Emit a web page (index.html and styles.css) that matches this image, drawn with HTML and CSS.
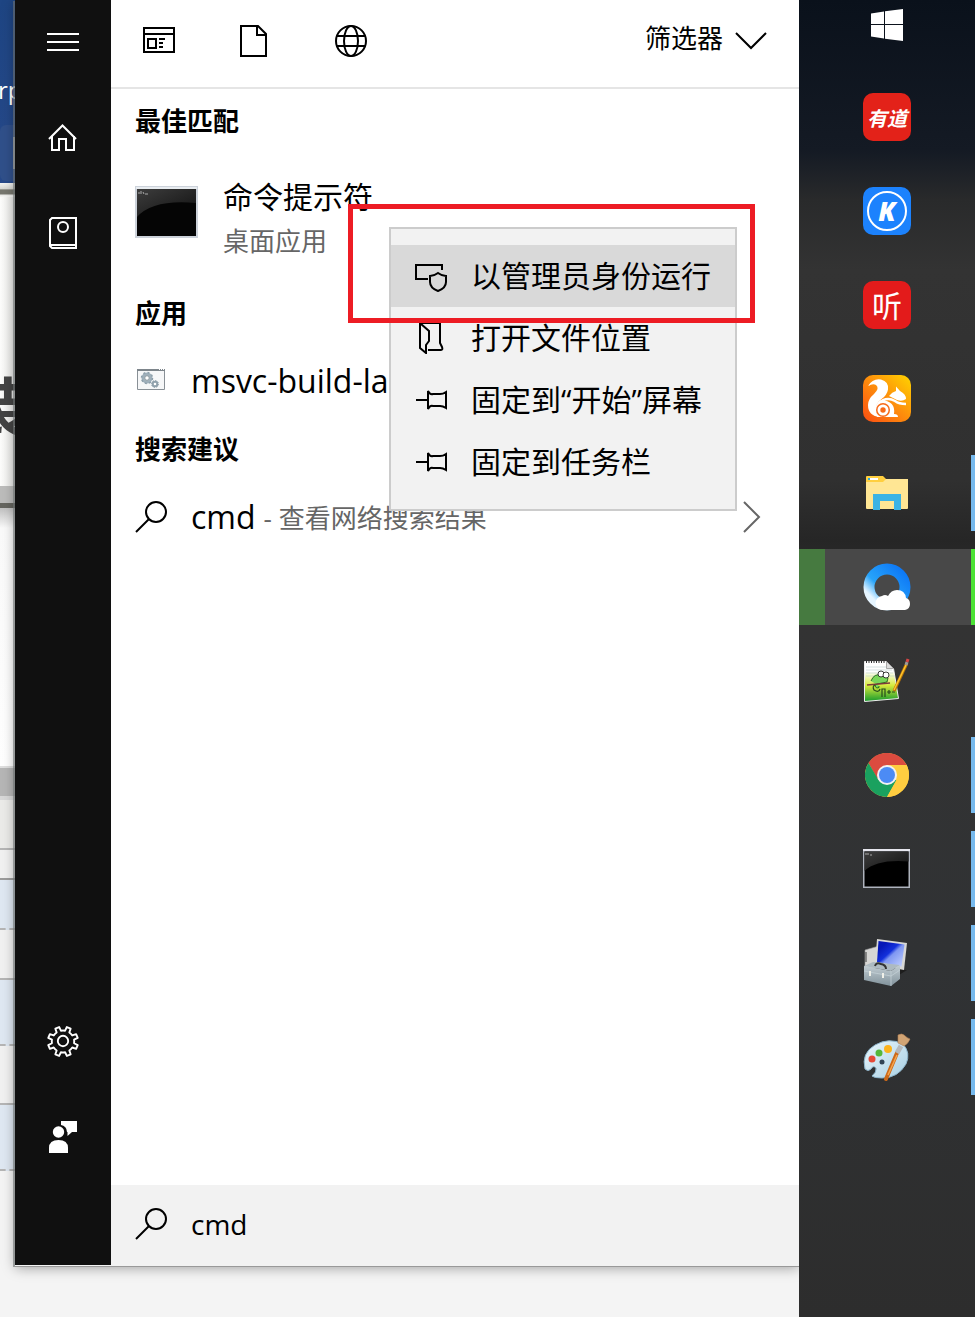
FILE: index.html
```html
<!DOCTYPE html>
<html lang="zh-CN">
<head>
  <meta charset="UTF-8" />
  <meta name="viewport" content="width=device-width, initial-scale=1.0"/>
  <title>cmd</title>
  <link rel="stylesheet" href="styles.css">
</head>
<body>

  <!-- Window behind the start menu -->
  <div class="backdrop">
    <div class="ribbon">
      <span class="ribbon-text">rp</span>
      <div class="ribbon-box"><i></i></div>
    </div>
    <div class="ruler"></div>
    <div class="page"><span class="page-text">装</span></div>
    <div class="page-end"></div>
    <div class="blank"></div>
    <div class="scroll"></div>
    <div class="strip strip-a"></div>
    <div class="strip strip-b"></div>
    <div class="strip strip-blue"></div>
    <div class="strip strip-c"></div>
    <div class="strip strip-blue strip-tall"></div>
    <div class="strip strip-d"></div>
    <div class="strip strip-blue strip-tall"></div>
  </div>

  <div class="start">
    <nav class="rail">
      <button type="button" aria-label="菜单">
        <svg width="32" height="32" viewBox="0 0 32 32" fill="none" stroke="#fff" stroke-width="2"><path d="M0 8h32M0 16h32M0 24h32"/></svg>
      </button>
      <button type="button" aria-label="主页">
        <svg width="32" height="32" viewBox="0 0 32 32" fill="none" stroke="#fff" stroke-width="2"><path d="M2 17L15.500 3.500 29 17M5 14v14h7V17h7v11h8V14"/></svg>
      </button>
      <button type="button" aria-label="笔记本">
        <svg width="32" height="34" viewBox="0 0 32 34" fill="none" stroke="#fff" stroke-width="2"><path d="M5 1h24v30H5l-2-2V3zM4 28h25"/><circle cx="16" cy="10" r="5"/></svg>
      </button>
      <button type="button" class="rail-bottom" aria-label="设置">
        <svg width="34" height="34" viewBox="0 0 36 36" fill="none" stroke="#fff" stroke-width="2" stroke-linejoin="round"><path d="M13.900 3.200l1.900 3.900a11 11 0 0 1 4.400 0l1.900-3.900 4 1.700-1.400 4.100a11 11 0 0 1 3.100 3.100l4.100-1.400 1.700 4-3.900 1.900a11 11 0 0 1 0 3.800l3.900 1.900-1.700 4-4.100-1.400a11 11 0 0 1-3.100 3.100l1.400 4.100-4 1.700-1.900-3.900a11 11 0 0 1-4.400 0l-1.900 3.900-4-1.700 1.400-4.100a11 11 0 0 1-3.100-3.100l-4.100 1.400-1.700-4 3.900-1.900a11 11 0 0 1 0-3.800l-3.900-1.900 1.700-4 4.100 1.400a11 11 0 0 1 3.100-3.100L9.900 4.900z"/><circle cx="18" cy="18" r="5.500"/></svg>
      </button>
      <button type="button" aria-label="反馈">
        <svg width="32" height="34" viewBox="0 0 32 34" fill="#fff"><path d="M14 1h16v11h-5l-4.500 4v-4H20a7 7 0 0 0-6-7z"/><circle cx="11.500" cy="12" r="5.700"/><path d="M2 33v-5q0-8 9.500-8t9.500 8v5z"/></svg>
      </button>
    </nav>

    <main class="panel">
      <header class="filters">
        <button type="button" aria-label="应用">
          <svg width="32" height="32" viewBox="0 0 32 32" fill="none" stroke="#000" stroke-width="2"><path d="M1 3h30v24H1zM1 9h30M5 14h8v9H5zM16 14h6M16 18h4M16 22h4"/></svg>
        </button>
        <button type="button" aria-label="文档">
          <svg width="32" height="32" viewBox="0 0 32 32" fill="none" stroke="#000" stroke-width="2"><path d="M2 1h17l8 8v22H2zM18 1v9h9"/></svg>
        </button>
        <button type="button" aria-label="网页">
          <svg width="32" height="32" viewBox="0 0 32 32" fill="none" stroke="#000" stroke-width="2"><circle cx="16" cy="16" r="15"/><ellipse cx="16" cy="16" rx="7" ry="15"/><path d="M2 11h28M2 21h28"/></svg>
        </button>
        <button type="button" class="filter-more">
          <span>筛选器</span>
          <svg width="32" height="18" viewBox="0 0 32 18" fill="none" stroke="#000" stroke-width="2"><path d="M1 1l15 15L31 1"/></svg>
        </button>
      </header>

      <h2>最佳匹配</h2>
      <a href="#" class="best">
        <svg width="63" height="52" viewBox="0 0 63 52"><defs><linearGradient id="shine" x1="0" y1="0" x2="1" y2="1"><stop offset="0" stop-color="#3d3d3d"/><stop offset="1" stop-color="#101010"/></linearGradient></defs><path fill="#ccd2da" d="M0 0h63v52H0z"/><path fill="#e8ecf0" d="M1 1h61v2H1z"/><path fill="#050505" d="M2 3h59v47H2z"/><path fill="url(#shine)" d="M2 3h59v14Q18 13 2 31z"/><path fill="none" stroke="#aaa" d="M3 7h2M6 5v3M8 6l1 2M10 8h3"/></svg>
        <span>
          <span class="name">命令提示符</span>
          <span class="kind">桌面应用</span>
        </span>
      </a>

      <h2>应用</h2>
      <a href="#" class="result">
        <svg width="32" height="28" viewBox="0 0 32 28"><path fill="#f6f7f8" stroke="#899096" d="M2.500 2.500h27v20h-27z"/><path stroke="#7d858b" stroke-width="2" d="M2 3h28"/><path stroke="#fff" d="M24 2.500h1M26 2.500h1M28 2.500h1"/><circle cx="12" cy="11" r="4" fill="#fff" stroke="#9fb0bb" stroke-width="3"/><circle cx="12" cy="11" r="5.500" fill="none" stroke="#8b9da9" stroke-width="1.500" stroke-dasharray="2 2.300"/><circle cx="12" cy="11" r="2.300" fill="#fff" stroke="#829098"/><circle cx="20" cy="17" r="2.300" fill="#fff" stroke="#91a2ad" stroke-width="2"/><circle cx="20" cy="17" r="3.500" fill="none" stroke="#8b9da9" stroke-dasharray="1.400 1.300"/></svg>
        <span class="latin">msvc-build-la</span>
      </a>

      <h2>搜索建议</h2>
      <a href="#" class="result">
        <svg width="32" height="34" viewBox="0 0 32 34" fill="none" stroke="#000" stroke-width="2"><circle cx="21" cy="12" r="10"/><path d="M14 19L1 32"/></svg>
        <span class="latin">cmd</span>
        <span class="hint">- 查看网络搜索结果</span>
        <svg class="go" width="18" height="32" viewBox="0 0 18 32" fill="none" stroke="#666" stroke-width="2"><path d="M1 1l15 15L1 31"/></svg>
      </a>

      <label class="search">
        <svg width="32" height="34" viewBox="0 0 32 34" fill="none" stroke="#000" stroke-width="2"><circle cx="21" cy="12" r="10"/><path d="M14 19L1 32"/></svg>
        <input type="text" value="cmd" aria-label="搜索">
      </label>

      <!-- Right-click menu -->
      <div class="context">
        <button type="button" class="active">
          <svg width="32" height="32" viewBox="0 0 32 32" fill="none" stroke="#000" stroke-width="2"><path d="M27 10V5H1v14h12"/><path d="M23 13q4 3 8 3v6q0 6-8 9-8-3-8-9v-6q4 0 8-3z"/></svg>
          以管理员身份运行
        </button>
        <button type="button">
          <svg width="32" height="32" viewBox="0 0 32 32" fill="none" stroke="#000" stroke-width="2"><path d="M13 28h13q2 0 1-3l-2-4V1H5v25l6 5v-8l3-4V9L6 2"/></svg>
          打开文件位置
        </button>
        <button type="button">
          <svg width="32" height="32" viewBox="0 0 32 32" fill="none" stroke="#000" stroke-width="2"><path d="M1 16h11M13 7v18q2-4 5-3h7q3 0 6 2V8q-3 2-6 2h-7q-3 1-5-3z"/></svg>
          固定到“开始”屏幕
        </button>
        <button type="button">
          <svg width="32" height="32" viewBox="0 0 32 32" fill="none" stroke="#000" stroke-width="2"><path d="M1 16h11M13 7v18q2-4 5-3h7q3 0 6 2V8q-3 2-6 2h-7q-3 1-5-3z"/></svg>
          固定到任务栏
        </button>
      </div>
      <div class="marker"></div>
    </main>
  </div>

  <aside class="taskbar">
    <button type="button" class="win" aria-label="开始">
      <svg width="32" height="32" viewBox="0 0 32 32" fill="#fff"><path d="M0 4.500l13-2V15H0zM14 2.300L32 0v15H14zM0 16h13v13.500L0 27.500zM14 16h18v16l-18-2.300z"/></svg>
    </button>
    <button type="button" aria-label="有道">
      <span class="tile youdao">有道</span>
    </button>
    <button type="button" aria-label="酷狗">
      <span class="tile kugou"><b>K</b></span>
    </button>
    <button type="button" aria-label="听">
      <span class="tile ting">听</span>
    </button>
    <button type="button" aria-label="UC">
      <svg width="48" height="48" viewBox="0 0 48 48"><defs><linearGradient id="uc" x1="0" y1="1" x2="1" y2="0"><stop offset="0" stop-color="#fb4d12"/><stop offset=".5" stop-color="#fd8d0c"/><stop offset="1" stop-color="#ffd400"/></linearGradient></defs><rect width="48" height="47" rx="10" fill="url(#uc)"/><path fill="#fff" d="M5 11Q10 3 18 4.500q8 2 7 10-1 6-7 10-5 4-5 9 0 4 4 8.500Q5 41 5 30q0-6 6-11 6-6 2-9-3-2-8 1z"/><path fill="#fff" d="M26 21q3-4 7-5v-4.500l4 4.500q6 3 6 8-4 3-9 1-4-2-8-4z"/><path fill="none" stroke="#fff" stroke-width="2.500" d="M15 29q8-8 17-3 4 3 11 3"/><path fill="#fff" d="M18 25q15 1 13 14 4 0 4 3H14q-5-11 4-17z"/><circle cx="20" cy="35" r="7" fill="#f76a18"/><circle cx="20" cy="35" r="5.500" fill="#fff"/><circle cx="20" cy="35" r="2.700" fill="#f76a18"/></svg>
    </button>
    <button type="button" class="open" aria-label="文件资源管理器">
      <svg width="44" height="36" viewBox="0 0 44 36"><path fill="#ffe694" d="M1 4h42v29q0 1-1 1H2q-1 0-1-1z"/><path fill="#ffcf3f" d="M1 2q0-1 1-1h16l3 3-3 3H1z"/><path fill="#fff" d="M5 3h8v2H5z"/><path fill="#2cabe0" d="M3 3h2v2H3z"/><path fill="#3bb3e5" d="M8 19h28v16h-7V26H15v9H8z"/></svg>
    </button>
    <button type="button" class="open current" aria-label="浏览器">
      <svg width="48" height="48" viewBox="0 0 48 48"><defs><linearGradient id="qq" x1="0" y1="1" x2="1" y2="0"><stop offset=".15" stop-color="#e6f5ff"/><stop offset=".4" stop-color="#27a4fa"/><stop offset="1" stop-color="#0b74f5"/></linearGradient></defs><circle cx="24" cy="24" r="18" fill="none" stroke="url(#qq)" stroke-width="11"/><path fill="#fff" d="M20 47a7 7 0 0 1-1-14q3-2 6 0 3-6 9-6 8 0 9 8 4 1 4 6t-5 6z"/></svg>
    </button>
    <button type="button" aria-label="Notepad++">
      <svg width="48" height="48" viewBox="0 0 48 48"><defs><linearGradient id="npp" x1="0" y1="0" x2="0" y2="1"><stop offset=".25" stop-color="#fff"/><stop offset=".6" stop-color="#d6ea3c"/><stop offset="1" stop-color="#159a2c"/></linearGradient></defs><path fill="url(#npp)" stroke="#eee" d="M1.500 4.500h22l7 7 5 30-34 3z"/><path fill="#ddd" stroke="#888" stroke-width=".7" d="M23.500 4.500v7h7z"/><path stroke="#bcc" stroke-width=".6" d="M3 10h20M3 13h26M3 16h27M3 19h28"/><path fill="none" stroke="#333" stroke-width="2" stroke-dasharray="1 1.500" d="M3 5h20"/><path fill="#7ad65a" stroke="#151" stroke-width=".8" d="M8 24q3-8 11-6l6 3-1 4-10 2q-4 2 0 4 3 0 2-2"/><path stroke="#7b3b3b" stroke-width="1.500" d="M4 28l23-2"/><circle cx="18" cy="17" r="3" fill="#fff" stroke="#111" stroke-width=".8"/><circle cx="23" cy="18" r="3" fill="#fff" stroke="#111" stroke-width=".8"/><path fill="none" stroke="#274a1c" stroke-width="1.200" d="M12 28q-3 1-1 5 5 3 6-1M19 40v-8h3v8M24 35h4M26 33v4M29 35h3"/><path stroke="#b97508" stroke-width="3" d="M31 34L44 6"/><path stroke="#ffc52b" stroke-width="1.500" d="M31 33L43 8"/><path stroke="#999" stroke-width="3" d="M43 8l1-3"/><path stroke="#d64545" stroke-width="3" d="M44 5l1-3"/></svg>
    </button>
    <button type="button" class="open" aria-label="Chrome">
      <svg width="44" height="44" viewBox="0 0 44 44"><circle cx="22" cy="22" r="22" fill="#ffcd40"/><path fill="#db4b3f" d="M3.500 10A22 22 0 0 1 41.600 12H22L13 27z"/><path fill="#1aa15f" d="M3.500 10A22 22 0 0 0 22 44l9.500-17-18 0z"/><path fill="#ffcd40" d="M22 44a22 22 0 0 0 19.600-32H22l9.500 15z"/><circle cx="22" cy="22" r="10" fill="#f2f2f2"/><circle cx="22" cy="22" r="8" fill="#4c8bf5"/></svg>
    </button>
    <button type="button" class="open" aria-label="命令提示符">
      <svg width="48" height="42" viewBox="0 0 48 42"><path fill="#aeb3bd" d="M0 1h47v39H0z"/><path fill="#e6e6ee" d="M0 1h47v2H0z"/><path fill="#000" d="M1.500 3.500h44v35h-44z"/><path fill="url(#shine)" d="M1.500 3.500h44v10Q14 11 1.500 23z"/><path fill="none" stroke="#aaa" d="M2 6h2M5 5v2M7 7h2"/></svg>
    </button>
    <button type="button" class="open" aria-label="管理工具">
      <svg width="48" height="48" viewBox="0 0 48 48"><defs><linearGradient id="scr" x1="0" y1="0" x2="1" y2="1"><stop offset=".2" stop-color="#0618b8"/><stop offset=".45" stop-color="#1330dc"/><stop offset=".55" stop-color="#7f97f2"/><stop offset="1" stop-color="#c5d4ff"/></linearGradient><linearGradient id="box" x1="0" y1="0" x2="0" y2="1"><stop offset="0" stop-color="#c3ced4"/><stop offset="1" stop-color="#81929b"/></linearGradient></defs><path fill="#d6d6d4" stroke="#999" stroke-width=".6" d="M2 11l14-4v22H2z"/><path stroke="#3b3b3b" d="M3 13v10"/><path fill="#1d1d1d" d="M32 31l12 0-8 5z"/><path fill="#d8d8d6" d="M14 0l30 4-3 27-29-6z"/><path fill="url(#scr)" d="M15.500 2l26 3.500-3 22L14 23z"/><path fill="#adbac1" d="M1 27l9-4 27 3-9 6z"/><path fill="url(#box)" d="M1 27l27 5 9-6v14l-9 7-27-6z"/><path fill="none" stroke="#c4d0d6" stroke-width=".8" d="M1 32l27 5 9-6M28 32v15"/><path fill="none" stroke="#333" stroke-width="2" d="M12 27q1-4 6-2 5 1 5 5"/><path stroke="#f0f0e8" stroke-width="2" d="M7 32v5M20 34v5"/></svg>
    </button>
    <button type="button" class="open" aria-label="画图">
      <svg width="48" height="48" viewBox="0 0 48 48"><defs><linearGradient id="pal" x1="0" y1="0" x2="1" y2="1"><stop offset="0" stop-color="#e9f7fd"/><stop offset="1" stop-color="#a9cfe3"/></linearGradient></defs><path fill="url(#pal)" stroke="#8db4cb" d="M2 36Q-2 20 12 12t28-1q8 9 3 20-8 14-24 14-8 0-10-2 5-4 4-8-3-3-5 1-3 3-6 0z"/><circle cx="9" cy="26" r="3.500" fill="#e54a38"/><circle cx="16" cy="20" r="3.500" fill="#55b83b"/><circle cx="25" cy="16" r="4" fill="#fbb31d"/><circle cx="19" cy="29" r="2.500" fill="#314354"/><path stroke="#cd6918" stroke-width="4" stroke-linecap="round" d="M34 20L23 46"/><path stroke="#f4a650" stroke-width="1.500" d="M34 22l-9 20"/><path stroke="#b4b8bb" stroke-width="5" d="M34 20l4-7"/><path fill="#d1a474" stroke="#b18255" stroke-width=".6" d="M35 10V2q4-2 6 0 3 3 6 4-2 5-6 7z"/></svg>
    </button>
  </aside>

</body>
</html>
```
FILE: styles.css
```css
* {
  box-sizing: border-box;
}
body {
  margin: 0;
  min-height: 100vh;
  display: flex;
  background-color: #f4f4f4;
  font-family: "Open Sans", "Noto Sans CJK SC", sans-serif;
  color: #000;
}
button {
  border: none;
  background: none;
  padding: 0;
  font-family: inherit;
  color: inherit;
  cursor: pointer;
}
a {
  color: inherit;
  text-decoration: none;
}
svg {
  display: block;
  flex: none;
}

/* window behind */
.backdrop {
  width: 15px;
  flex: none;
  overflow: hidden;
}
.ribbon {
  height: 183px;
  padding-top: 74px;
  background: linear-gradient(#1e4583, #27498a);
  overflow: hidden;
}
.ribbon-text {
  display: block;
  height: 51px;
  margin-left: -2px;
  font-size: 24px;
  line-height: 32px;
  color: #fff;
}
.ribbon-box {
  height: 56px;
  padding: 12px 0;
  background-color: #30508a;
  border-radius: 6px 0 0 6px;
}
.ribbon-box i {
  display: block;
  width: 2px;
  height: 32px;
  margin-left: 13px;
  background-color: #b8bcc4;
}
.ruler {
  height: 14px;
  background: linear-gradient(#f4f4f2 0, #d8d8d4 40%, #77776f 50%, #77776f 75%, #f4f4f2 90%);
}
.page {
  height: 289px;
  padding-top: 170px;
  background: linear-gradient(to right, #fdfdfc, #e4e4e2);
}
.page-text {
  display: block;
  width: 64px;
  margin-left: -35px;
  font-size: 64px;
  font-weight: bold;
  line-height: 80px;
  color: #444;
}
.page-end {
  height: 22px;
  background-color: #bcbcbb;
  border-bottom: 5px solid #65655f;
}
.blank {
  height: 258px;
  background: linear-gradient(#c0c0c0, #fafafa 20px, #fff);
}
.scroll {
  height: 34px;
  background-color: #b6b6b6;
  border-top: 2px solid #dedede;
  border-bottom: 4px solid #d8d8d8;
}
.strip {
  height: 50px;
  border-bottom: 2px solid #b5b5b5;
  background-color: #f1f1f1;
}
.strip-a {
  background-color: #ebebe9;
}
.strip-b {
  height: 30px;
  border-color: #9c9c9c;
}
.strip-blue {
  background-color: #dfe8f2;
  border-bottom-style: dashed;
}
.strip-tall {
  height: 66px;
}
.strip-d {
  height: 59px;
}

/* start menu */
.start {
  flex: 1;
  display: flex;
  margin-bottom: 51px;
  position: relative;
  box-shadow: 0 1px 0 #999, -2px 1px 0 rgba(110, 115, 115, 0.6), 0 2px 12px rgba(0, 0, 0, 0.35);
}
.rail {
  width: 96px;
  flex: none;
  display: flex;
  flex-direction: column;
  gap: 16px;
  padding: 2px 0 88px;
  background-color: #101010;
  border-bottom: 1px solid #f4f4f4;
}
.rail button {
  height: 80px;
  display: flex;
  align-items: center;
  justify-content: center;
}
.rail .rail-bottom {
  margin-top: auto;
}
.panel {
  flex: 1;
  min-width: 0;
  display: flex;
  flex-direction: column;
  position: relative;
  background-color: #fff;
}
.filters {
  height: 89px;
  display: flex;
  align-items: center;
  gap: 64px;
  padding: 0 32px 6px;
  border-bottom: 2px solid #e5e5e5;
}
.filter-more {
  margin-left: auto;
  display: flex;
  align-items: center;
  gap: 12px;
  font-size: 26px;
  line-height: 40px;
}
.filter-more span {
  padding-bottom: 6px;
}
h2 {
  margin: 0;
  padding: 0 24px;
  font-size: 26px;
  line-height: 64px;
}
.best {
  height: 128px;
  display: flex;
  gap: 25px;
  padding: 22px 24px;
}
.best svg {
  margin-top: 11px;
}
.name,
.kind {
  display: block;
  font-size: 30px;
  line-height: 44px;
}
.kind {
  font-size: 26px;
  color: #666;
}
.result {
  height: 72px;
  display: flex;
  align-items: center;
  padding: 0 38px 0 24px;
}
.latin {
  margin: 0 8px 0 24px;
  padding-bottom: 2px;
  font-size: 32px;
}
.hint {
  font-size: 26px;
  color: #666;
}
.go {
  margin-left: auto;
}
.search {
  height: 81px;
  margin-top: auto;
  display: flex;
  align-items: center;
  gap: 24px;
  padding: 0 24px 3px;
  background-color: #f2f2f2;
}
.search input {
  flex: 1;
  min-width: 0;
  padding: 0;
  border: none;
  outline: none;
  background: none;
  font-family: inherit;
  font-size: 28px;
  color: #000;
}

/* menu that opens over the results */
.context {
  position: absolute;
  left: 278px;
  top: 227px;
  width: 348px;
  padding: 16px 0;
  background-color: #f2f2f2;
  border: 2px solid #ccc;
}
.context button {
  width: 100%;
  height: 62px;
  display: flex;
  align-items: center;
  gap: 24px;
  padding: 0 24px;
  font-size: 30px;
  line-height: 44px;
  white-space: nowrap;
}
.context .active {
  background-color: #d9d9d9;
}
.marker {
  position: absolute;
  left: 237px;
  top: 204px;
  width: 407px;
  height: 119px;
  border: 5px solid #ed1c24;
  pointer-events: none;
}

/* taskbar */
.taskbar {
  width: 176px;
  flex: none;
  display: flex;
  flex-direction: column;
  gap: 18px;
  position: relative;
  background: linear-gradient(#0a111b 0, #141a24 150px, #292a2b 200px, #333 270px, #303030 480px, #262626 540px, #333 620px, #303234 960px, #2d2d2d 100%);
}
.taskbar button {
  height: 76px;
  display: flex;
  align-items: center;
  justify-content: center;
}
.taskbar .win {
  height: 50px;
  margin-bottom: 11px;
}
.taskbar .open {
  border-right: 4px solid #76b9ed;
  padding-left: 4px;
}
.taskbar .current {
  border-right-color: #4be234;
  background: linear-gradient(to right, #467a40 26px, #484848 26px);
}
.tile {
  width: 48px;
  height: 48px;
  display: flex;
  align-items: center;
  justify-content: center;
  border-radius: 10px;
  color: #fff;
}
.youdao {
  background-color: #e32219;
  font-size: 20px;
  font-weight: bold;
  font-style: italic;
}
.kugou {
  background-color: #1c82fd;
}
.kugou b {
  width: 40px;
  height: 40px;
  border: 2px solid #fff;
  border-radius: 50%;
  font-size: 26px;
  font-weight: 800;
  line-height: 36px;
  font-style: italic;
}
.ting {
  padding-bottom: 3px;
  background-color: #e31b1b;
  font-size: 30px;
}
```
